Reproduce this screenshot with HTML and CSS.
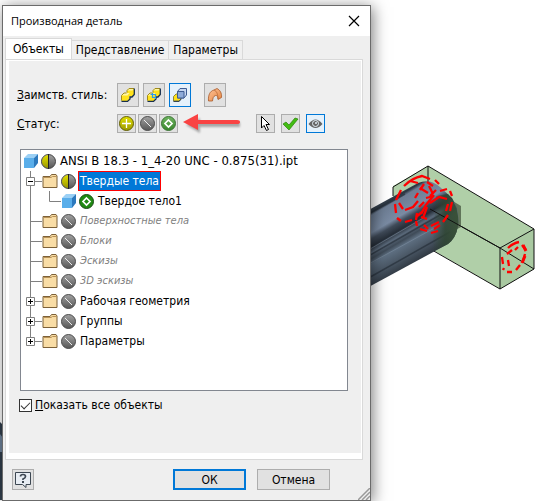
FILE: index.html
```
<!DOCTYPE html>
<html lang="ru">
<head>
<meta charset="utf-8">
<title>Производная деталь</title>
<link rel="stylesheet" href="styles.css">
</head>
<body>

<!-- shared icons -->
<svg class="defs" width="0" height="0">
  <defs>
    <linearGradient id="gray" x1="0" y1="0" x2="0" y2="1"><stop offset="0" stop-color="#a2a2a2"/><stop offset="1" stop-color="#565656"/></linearGradient>
    <linearGradient id="yellow" x1="0" y1="0" x2="0" y2="1"><stop offset="0" stop-color="#e2e000"/><stop offset="1" stop-color="#9b9800"/></linearGradient>
    <linearGradient id="green" x1="0" y1="0" x2="0" y2="1"><stop offset="0" stop-color="#6fb560"/><stop offset="1" stop-color="#38862c"/></linearGradient>
    <linearGradient id="steel" gradientUnits="userSpaceOnUse" x1="383" y1="200" x2="421" y2="264">
      <stop offset="0" stop-color="#3c4855"/><stop offset=".06" stop-color="#2c3641"/><stop offset=".1" stop-color="#6d7d93"/><stop offset=".3" stop-color="#7a8ba3"/>
      <stop offset=".37" stop-color="#404b59"/><stop offset=".46" stop-color="#262e38"/><stop offset=".53" stop-color="#596879"/>
      <stop offset=".6" stop-color="#3f4b58"/><stop offset=".66" stop-color="#5e6f81"/><stop offset=".8" stop-color="#4a5765"/><stop offset="1" stop-color="#252c34"/>
    </linearGradient>
    <linearGradient id="shade" x1="0" y1="0" x2="1" y2="0"><stop offset="0" stop-color="#304832" stop-opacity="0"/><stop offset=".5" stop-color="#2f4633" stop-opacity=".85"/><stop offset="1" stop-color="#3a5239"/></linearGradient>
    <linearGradient id="orange" x1="0" y1="0" x2="1" y2="1"><stop offset="0" stop-color="#ffc49a"/><stop offset="1" stop-color="#e5853f"/></linearGradient>
  </defs>
  <symbol id="cube" viewBox="0 0 14 14">
    <path d="M0 4L4 0H14L10 4Z" fill="#9bd0f5"/><path d="M0 4H10V14H0Z" fill="#5aaeea"/><path d="M10 4L14 0V9L10 14Z" fill="#2c79bd"/>
  </symbol>
  <symbol id="folder" viewBox="0 0 16 16">
    <path d="M1 14V3.500H8L9.500 1.500H14L15 3V14.500H1Z" fill="#f9dda6" stroke="#7d6138"/><path d="M1.500 4.500H9L10.500 3.500H14.500" fill="none" stroke="#b89358"/>
  </symbol>
  <symbol id="none" viewBox="0 0 15 15">
    <circle cx="7.500" cy="7.500" r="7" fill="url(#gray)" stroke="#4d4d4d"/><path d="M4 4L11 11" stroke="#eee"/>
  </symbol>
  <symbol id="half" viewBox="0 0 15 15">
    <circle cx="7.500" cy="7.500" r="7" fill="url(#gray)" stroke="#444"/><path d="M7.500 1A6.500 6.500 0 0 0 7.500 14Z" fill="url(#yellow)"/><path d="M7.500 0V15" stroke="#222"/>
  </symbol>
  <symbol id="plus" viewBox="0 0 15 15">
    <circle cx="7.500" cy="7.500" r="7" fill="url(#yellow)" stroke="#625f08"/><path d="M7.500 3V12M3 7.500H12" stroke="#fff" stroke-width="1.300"/>
  </symbol>
  <symbol id="solid" viewBox="0 0 15 15">
    <circle cx="7.500" cy="7.500" r="7" fill="#208a13" stroke="#1b4c17"/><path d="M7.500 4L11 7.500L7.500 11L4 7.500Z" fill="none" stroke="#fff" stroke-width="1.700"/>
  </symbol>
  <symbol id="derived" viewBox="0 0 15 15">
    <circle cx="7.500" cy="7.500" r="7" fill="url(#green)" stroke="#3d7436"/><path d="M7.500 4L11 7.500L7.500 11L4 7.500Z" fill="none" stroke="#fff" stroke-width="1.700"/>
  </symbol>
  <symbol id="bodies" viewBox="0 0 14 14">
    <path d="M6 2.500L8 .5H13V6.500L11 8.500H6Z" fill="#ffe21c"/><path d="M6 2.500L8 .5H13L11.500 2.500Z" fill="#fff6a0"/>
    <path d="M.5 7.500L3 5H8.500V11L6.500 13H.5Z" fill="#ffe21c"/><path d="M.5 7.500L3 5H8.500L6.500 7.500Z" fill="#fff6a0"/>
    <path d="M6 4.500V2.500L8 .5H13M.5 12.500V7.500L3 5H5.500" fill="none" stroke="#a08a1c"/>
    <path d="M13.300 .5V6.500L11 9H9V11L6.500 13.400H.5" fill="none" stroke="#182f4c" stroke-width="1.300"/>
  </symbol>
  <symbol id="line" viewBox="0 0 18 20"><path d="M6.500 0V20" stroke="#808080"/></symbol>
  <symbol id="tee" viewBox="0 0 18 20"><path d="M6.500 0V20M6.500 10.500H18" stroke="#808080"/></symbol>
  <symbol id="minus" viewBox="0 0 18 20">
    <path d="M6.500 0V20M6.500 10.500H18" stroke="#808080"/><path d="M2.500 6.500H10.500V14.500H2.500Z" fill="#fff" stroke="#808080"/><path d="M4 10.500H9" stroke="#000"/>
  </symbol>
  <symbol id="expand" viewBox="0 0 18 20">
    <path d="M6.500 0V20M6.500 10.500H18" stroke="#808080"/><path d="M2.500 6.500H10.500V14.500H2.500Z" fill="#fff" stroke="#808080"/><path d="M4 10.500H9M6.500 8V13" stroke="#000"/>
  </symbol>
  <symbol id="last" viewBox="0 0 18 20">
    <path d="M6.500 0V10M6.500 10.500H18" stroke="#808080"/><path d="M2.500 6.500H10.500V14.500H2.500Z" fill="#fff" stroke="#808080"/><path d="M4 10.500H9M6.500 8V13" stroke="#000"/>
  </symbol>
  <symbol id="elbow" viewBox="0 0 20 20"><path d="M7.500 0V10.500H19" fill="none" stroke="#808080"/></symbol>
</svg>

<!-- 3D model behind the dialog -->
<svg class="scene" width="546" height="502" viewBox="0 0 546 502">
  <path d="M428 166L534 229V269L500 289L393 227V186Z" fill="#b0cfa8"/>
  <path d="M500 248L534 229V269L500 289Z" fill="#a9c9a1"/>
  <path d="M428 166L534 229V269L500 289L432 250M428 166L393 187V196M428 166V186M500 289V248L534 229M500 248L430 209M500 248L534 269" fill="none" stroke="#111"/>
  <path d="M446 201L451 200L461 206V227L450 233Z" fill="#607459"/>
  <path d="M365 212L418 183Q430 178 440 187L452 198Q460 210 458 226Q456 238 448 244L365 289Z" fill="url(#steel)"/>
  <path d="M365 216L405 194M365 258L440 215M365 280L450 232" stroke="#222a33" stroke-width="1.500" opacity=".6" fill="none"/>
  <path d="M365 252L425 217M365 266L440 225" stroke="#7b8c9e" opacity=".6" fill="none"/>
  <path d="M436 196L448 194Q460 208 458 226Q456 238 448 244L432 252Z" fill="url(#shade)"/>
  <path d="M430 209L500 248" stroke="#111"/>
  <g fill="none" stroke="#f00" stroke-width="2.300">
    <path d="M404 186Q412 178 422 176L430 179M435 180L439 184M401 190L396 200M395 204L396 213M397 218L401 221M405 222L412 220M416 217L422 212"/>
    <path d="M410 181L418 183M424 184L420 190M427 182L433 186M436 190L430 196"/>
    <path d="M399 203L403 209M405 210L413 207L418 201M418 193L415 198M420 188L428 193M429 186L433 194M426 198L434 196M424 202L419 207"/>
    <path d="M434 195L426 205L421 214M417 213L416 220M416 221L417 226M420 229L427 231M431 233L438 231M421 217L427 219"/>
    <path d="M440 191L447 189M450 191L452 196M452 202L450 211M448 215L443 222M440 225L434 229M428 229L424 225"/>
    <path d="M430 203L439 197L447 199M448 204L446 211M427 207L423 218M439 222L431 226"/>
    <path d="M508 248Q513 243 519 242M522 245L526 250M525 254L523 261M520 265L516 270M512 272L507 272M504 268L503 270M503 264L502 257M507 254L512 250M508 260L509 266M515 250L518 247"/>
    <path d="M523 245L526 251M525 256L522 263" stroke-width="3"/>
  </g>
  <path d="M0 422L4 426V500H0Z" fill="#33404e"/><path d="M0 434L3 438V452H0Z" fill="#70859d"/>
</svg>

<form class="dialog">
  <header class="titlebar">
    <h1 class="title">Производная деталь</h1>
    <button type="button" class="close" aria-label="Закрыть">
      <svg width="12" height="12" viewBox="0 0 12 12"><path d="M1 1L11 11M11 1L1 11" stroke="#000" stroke-width="1.200"/></svg>
    </button>
  </header>

  <div class="tabs">
    <button type="button" class="tab active">Объекты</button>
    <button type="button" class="tab">Представление</button>
    <button type="button" class="tab">Параметры</button>
  </div>

  <div class="panel">
    <div class="page">
      <div class="tools style-row">
        <span class="caption"><u>З</u>аимств. стиль:</span>
        <div class="group wide">
          <button type="button" class="tool tall" aria-label="Объединённое тело">
            <svg width="14" height="14"><use href="#bodies"/></svg>
          </button>
          <button type="button" class="tool tall" aria-label="Тело с кромками">
            <svg width="14" height="14" viewBox="0 0 14 14"><use href="#bodies" width="14" height="14"/><path d="M3.500 6.500H8.500V11M5.500 5V9.500H9" stroke="#2b9bed" stroke-width="1.200" fill="none"/></svg>
          </button>
          <button type="button" class="tool tall on" aria-label="Несколько тел">
            <svg width="14" height="14" viewBox="0 0 14 14"><path d="M.5 8.500L3 6H8V11L6 13H.5Z" fill="#ffe11a" stroke="#8b853d"/><path d="M.5 13.400H6L8.500 11" fill="none" stroke="#27384c"/><path d="M4.500 3.500L7 .5H13.500V7L11 10H4.500Z" fill="#c5d6f0" stroke="#3f5d92"/><path d="M4.500 3.500H11V10H4.500Z" fill="#8eabd8" stroke="#3f5d92"/></svg>
          </button>
          <button type="button" class="tool tall apart" aria-label="Поверхность">
            <svg width="16" height="16" viewBox="0 0 16 16"><path d="M1.500 14C1 8 3 4 7 3L10 1.500C13 3 15 6 14.500 10.500L11 12.500C11 10 10 8 8.500 8.500C6 9.500 6 11 5.500 14Z" fill="url(#orange)" stroke="#a85a2c" stroke-width=".8"/><path d="M7 3C10 4 11 8 11 12" fill="none" stroke="#b96a38" stroke-width=".8"/></svg>
          </button>
        </div>
      </div>

      <div class="tools status-row">
        <span class="caption"><u>С</u>татус:</span>
        <div class="group">
          <button type="button" class="tool" aria-label="Добавить"><svg width="15" height="15"><use href="#plus"/></svg></button>
          <button type="button" class="tool" aria-label="Исключить"><svg width="15" height="15"><use href="#none"/></svg></button>
          <button type="button" class="tool" aria-label="Твердое тело"><svg width="15" height="15"><use href="#derived"/></svg></button>
        </div>
        <svg class="arrow" width="62" height="22" viewBox="0 0 62 22">
          <path class="arrow-shadow" d="M4 12L18 5V9H58V14H18V20Z" fill="#777" opacity=".6"/>
          <path d="M1 9L16 1V7H55Q58 7 58 9T55 11H16V17Z" fill="#f94343"/>
        </svg>
        <div class="group actions">
          <button type="button" class="tool" aria-label="Выбрать"><svg width="17" height="17" viewBox="0 0 17 17"><path d="M4.500 1.500V13L7 10.500L9.500 15.500L11.500 14.500L9 9.500H12.500Z" fill="#fff" stroke="#000"/></svg></button>
          <button type="button" class="tool" aria-label="Принять"><svg width="17" height="17" viewBox="0 0 17 17"><path d="M1 9L4 7L7 10L13 3L16 4L7 15Z" fill="#42bd12" stroke="#298108" stroke-width=".7"/></svg></button>
          <button type="button" class="tool on" aria-label="Видимость"><svg width="17" height="17" viewBox="0 0 17 17"><path d="M1.500 9Q8.500 0 15.500 9Q8.500 17 1.500 9Z" fill="#666"/><circle cx="8.500" cy="8.500" r="3" fill="#666" stroke="#e5f1fb"/><circle cx="9" cy="8" r="1" fill="#e5f1fb"/></svg></button>
        </div>
      </div>

      <ul class="tree">
        <li class="row">
          <svg width="14" height="14"><use href="#cube"/></svg><svg class="state" width="15" height="15"><use href="#half"/></svg>
          <span class="label file">ANSI B 18.3 - 1_4-20 UNC - 0.875(31).ipt</span>
        </li>
        <li class="row">
          <svg width="18" height="20"><use href="#minus"/></svg><svg width="16" height="16"><use href="#folder"/></svg><svg class="state" width="15" height="15"><use href="#half"/></svg>
          <span class="label selected">Твердые тела</span>
        </li>
        <li class="row">
          <svg width="18" height="20"><use href="#line"/></svg><svg width="20" height="20"><use href="#elbow"/></svg><svg width="14" height="14"><use href="#cube"/></svg><svg class="state" width="15" height="15"><use href="#solid"/></svg>
          <span class="label">Твердое тело1</span>
        </li>
        <li class="row">
          <svg width="18" height="20"><use href="#tee"/></svg><svg width="16" height="16"><use href="#folder"/></svg><svg class="state" width="15" height="15"><use href="#none"/></svg>
          <span class="label empty">Поверхностные тела</span>
        </li>
        <li class="row">
          <svg width="18" height="20"><use href="#tee"/></svg><svg width="16" height="16"><use href="#folder"/></svg><svg class="state" width="15" height="15"><use href="#none"/></svg>
          <span class="label empty">Блоки</span>
        </li>
        <li class="row">
          <svg width="18" height="20"><use href="#tee"/></svg><svg width="16" height="16"><use href="#folder"/></svg><svg class="state" width="15" height="15"><use href="#none"/></svg>
          <span class="label empty">Эскизы</span>
        </li>
        <li class="row">
          <svg width="18" height="20"><use href="#tee"/></svg><svg width="16" height="16"><use href="#folder"/></svg><svg class="state" width="15" height="15"><use href="#none"/></svg>
          <span class="label empty">3D эскизы</span>
        </li>
        <li class="row">
          <svg width="18" height="20"><use href="#expand"/></svg><svg width="16" height="16"><use href="#folder"/></svg><svg class="state" width="15" height="15"><use href="#none"/></svg>
          <span class="label">Рабочая геометрия</span>
        </li>
        <li class="row">
          <svg width="18" height="20"><use href="#expand"/></svg><svg width="16" height="16"><use href="#folder"/></svg><svg class="state" width="15" height="15"><use href="#none"/></svg>
          <span class="label">Группы</span>
        </li>
        <li class="row">
          <svg width="18" height="20"><use href="#last"/></svg><svg width="16" height="16"><use href="#folder"/></svg><svg class="state" width="15" height="15"><use href="#none"/></svg>
          <span class="label">Параметры</span>
        </li>
      </ul>

      <div class="show-all">
        <input type="checkbox" id="showAll" class="check" checked>
        <label for="showAll"><u>П</u>оказать все объекты</label>
      </div>
    </div>
  </div>

  <footer class="footer">
    <button type="button" class="tool help" aria-label="Справка">
      <svg width="18" height="18" viewBox="0 0 18 18"><path d="M1.500 1.500H16.500V13.500H12V16.500L8.500 13.500H1.500Z" fill="#e8edf3" stroke="#3d4752"/><path d="M6.500 5.500Q6.500 3.500 9 3.500T11.500 5.500Q11.500 7 9 8V9" fill="none" stroke="#3d4752" stroke-width="1.700"/><path d="M8 10H10V12H8Z" fill="#3d4752"/></svg>
    </button>
    <button type="submit" class="btn primary">ОК</button>
    <button type="button" class="btn">Отмена</button>
    <svg class="grip" width="12" height="12" viewBox="0 0 12 12"><path d="M0 12L12 0M4 12L12 4M8 12L12 8" stroke="#999" stroke-width="1.500"/></svg>
  </footer>
</form>

</body>
</html>
```
FILE: styles.css
```
* {
  box-sizing: border-box;
}
body {
  margin: 0;
  background: #fff;
  font-family: "DejaVu Sans Condensed", "Noto Sans", sans-serif;
  font-size: 12px;
  line-height: 16px;
  color: #000;
}
svg {
  display: block;
  flex: none;
}
button {
  font: inherit;
  color: inherit;
  padding: 0;
}
.defs,
.scene {
  position: absolute;
  top: 0;
  left: 0;
}
.dialog {
  position: relative;
  margin: 5px 175px 0 2px;
  background: #efefef;
  border: 1px solid #6b6b6b;
  box-shadow: 2px 2px 14px rgba(0, 0, 0, 0.5);
}

/* title bar */
.titlebar {
  display: flex;
  align-items: center;
  justify-content: space-between;
  height: 30px;
  padding: 0 10px 0 8px;
  background: #fff;
}
.title {
  margin: 0;
  font-family: "Open Sans", sans-serif;
  font-size: 11px;
  font-weight: normal;
}
.close {
  border: 0;
  background: none;
}

/* tabs */
.tabs {
  display: flex;
  align-items: flex-end;
  height: 23px;
  padding: 0 2px;
}
.tab {
  height: 19px;
  padding: 0 4px;
  border: 1px solid #d9d9d9;
  border-bottom: 0;
  border-left: 0;
  background: #f0f0f0;
}
.tab.active {
  height: 21px;
  border-left: 1px solid #d9d9d9;
  padding: 0 7px;
  background: #fff;
}
.panel {
  margin: 0 7px 0 2px;
  padding: 1px 1px 6px 3px;
  background: #fff;
  border: 1px solid #d9d9d9;
}
.page {
  padding: 22px 13px 40px 8px;
  background: #efefef;
}

/* toolbars */
.tools {
  display: flex;
  align-items: center;
}
.style-row {
  height: 24px;
}
.status-row {
  height: 19px;
  margin-top: 7px;
}
.caption {
  width: 100px;
}
.group {
  display: flex;
  gap: 2px;
}
.wide {
  gap: 4px;
}
.tool {
  display: flex;
  align-items: center;
  justify-content: center;
  width: 19px;
  height: 19px;
  border: 1px solid #adadad;
  background: #e1e1e1;
}
.tall {
  width: 22px;
  height: 24px;
}
.on {
  border-color: #0078d7;
  background: #e5f1fb;
}
.apart {
  margin-left: 9px;
}
.arrow {
  margin-left: 4px;
}
.arrow-shadow {
  filter: blur(1px);
}
.actions {
  gap: 6px;
  margin-left: 12px;
}

/* tree */
.tree {
  height: 242px;
  margin: 16px 0 0 3px;
  padding: 1px 3px;
  list-style: none;
  background: #fff;
  border: 1px solid #828790;
}
.row {
  display: flex;
  align-items: center;
  height: 20px;
}
.state {
  margin: 0 3px;
}
.label {
  padding: 1px;
  white-space: nowrap;
}
.file {
  font-size: 13px;
}
.selected {
  color: #fff;
  background: #0078d7;
  outline: 1px solid #f00;
}
.empty {
  font-size: 11px;
  font-style: italic;
  color: #808080;
}

.show-all {
  display: flex;
  align-items: center;
  gap: 3px;
  margin: 6px 0 0 2px;
}
.check {
  appearance: none;
  width: 13px;
  height: 13px;
  margin: 0;
  border: 1px solid #333;
  background: #fff;
}
.check:checked::before {
  content: "";
  display: block;
  width: 8px;
  height: 4px;
  margin: 2px 0 0 1px;
  border: solid #333;
  border-width: 0 0 1px 1px;
  transform: rotate(-45deg);
}

/* buttons */
.footer {
  display: flex;
  align-items: flex-start;
  height: 40px;
  padding: 9px 0 0 9px;
}
.help {
  width: 22px;
  height: 21px;
  margin-right: auto;
}
.btn {
  width: 73px;
  height: 21px;
  margin-right: 11px;
  border: 1px solid #adadad;
  background: #e1e1e1;
}
.primary {
  border: 2px solid #0078d7;
}
.grip {
  align-self: flex-end;
  margin-left: 17px;
}
```
